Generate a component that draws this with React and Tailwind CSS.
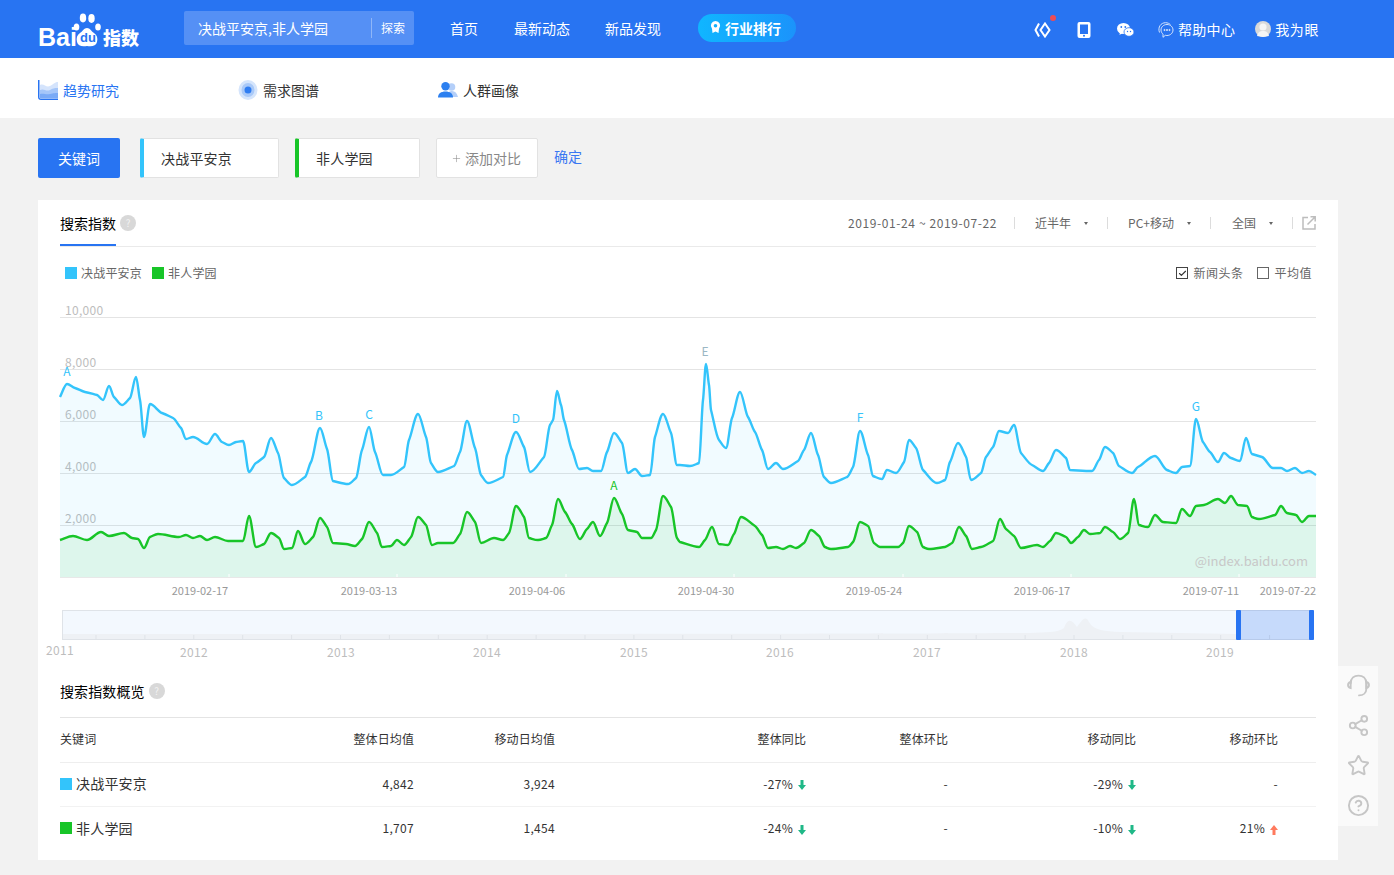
import { Share2, Star, CircleHelp, Plus, Check } from 'lucide-react'

const font = { fontFamily: '"Noto Sans CJK SC", "Liberation Sans", sans-serif' }

const blue = [60,397,67,384,75,388,85,392,97,395,103,400,109,386,114,397,122,405,130,398,136,377,140,400,144,437,150,404,162,413,173,418,181,428,186,439,193,437,207,444,215,434,222,442,229,445,236,442,243,441,249,472,256,463,264,457,271,438,278,453,284,478,292,485,305,477,311,462,320,428,327,449,333,481,348,484,356,478,362,450,369,427,375,452,383,475,391,475,404,467,409,440,418,414,426,437,431,463,438,472,454,466,460,452,467,421,475,448,481,475,488,483,503,477,507,455,516,432,524,447,530,472,544,457,550,425,553,420,557,391,561,405,564,420,572,450,579,469,587,468,593,471,601,471,607,452,614,433,622,443,628,473,635,469,642,476,650,475,655,437,663,414,671,433,677,465,680,465,690,466,699,463,703,400,706,364,709,385,711,410,719,440,726,448,732,418,740,392,748,417,755,432,762,450,768,469,776,463,783,469,798,461,804,450,811,433,818,455,824,477,831,483,847,477,853,467,860,431,868,455,873,476,882,479,887,470,896,473,904,462,909,440,916,448,923,470,937,483,945,480,950,462,958,443,966,457,971,480,981,473,986,457,993,447,999,431,1008,433,1014,425,1021,453,1032,465,1043,471,1049,463,1056,450,1066,458,1070,470,1092,471,1099,460,1105,447,1113,453,1119,466,1132,473,1138,467,1155,456,1167,470,1176,473,1182,467,1190,466,1196,419,1203,442,1210,452,1218,462,1224,453,1231,458,1240,461,1246,438,1252,454,1262,457,1273,468,1281,468,1287,471,1295,468,1302,473,1309,471,1316,475]

const green = [60,540,73,536,87,540,101,532,109,536,124,533,132,538,138,539,144,548,150,537,158,534,179,537,186,535,193,538,200,536,207,540,215,537,228,541,243,541,249,516,256,547,264,544,271,533,279,538,284,549,292,548,298,531,305,544,313,537,320,518,327,527,333,543,346,544,355,546,362,539,369,522,377,533,382,547,391,546,397,540,404,545,411,537,418,517,426,525,432,545,438,543,453,543,460,534,467,512,475,522,481,543,494,538,503,540,509,533,516,506,524,517,529,538,538,540,546,538,552,525,558,499,565,512,572,524,580,539,587,529,593,522,600,536,607,523,614,498,622,514,628,530,637,532,642,538,651,538,656,530,663,496,671,507,677,538,680,542,699,547,705,540,712,527,719,544,728,545,734,534,741,517,755,526,762,535,768,548,776,547,783,549,790,546,796,548,804,543,811,530,819,536,825,547,831,549,848,547,853,542,860,522,868,526,874,543,880,547,898,547,903,543,909,526,917,532,923,547,929,549,945,547,952,543,959,527,966,536,972,549,981,547,993,541,1000,519,1006,529,1014,536,1021,548,1037,545,1043,547,1050,541,1056,533,1066,537,1071,543,1078,537,1084,530,1090,534,1100,533,1105,527,1113,532,1120,539,1128,533,1134,499,1139,525,1148,527,1155,515,1163,522,1176,523,1182,509,1190,516,1196,506,1204,505,1218,499,1225,503,1231,496,1238,505,1247,506,1252,517,1259,519,1275,515,1281,506,1287,513,1296,515,1302,522,1309,516,1316,516]

// monotone curve through the flat [x,y,x,y...] list, no overshoot at the peaks
function smooth(flat) {
  const p = []
  for (let i = 0; i < flat.length; i += 2) p.push([flat[i], flat[i + 1]])
  const n = p.length
  const s = []
  for (let i = 0; i < n - 1; i++) s.push((p[i + 1][1] - p[i][1]) / (p[i + 1][0] - p[i][0]))
  const t = p.map((_, i) => {
    if (i === 0) return s[0]
    if (i === n - 1) return s[n - 2]
    if (s[i - 1] * s[i] <= 0) return 0
    const h0 = p[i][0] - p[i - 1][0]
    const h1 = p[i + 1][0] - p[i][0]
    const mid = (s[i - 1] * h1 + s[i] * h0) / (h0 + h1)
    return Math.sign(s[i]) * Math.min(Math.abs(s[i - 1]), Math.abs(s[i]), 0.5 * Math.abs(mid))
  })
  let d = `M${p[0][0]} ${p[0][1]}`
  for (let i = 0; i < n - 1; i++) {
    const h = (p[i + 1][0] - p[i][0]) / 3
    d += `C${(p[i][0] + h).toFixed(1)} ${(p[i][1] + t[i] * h).toFixed(1)} ${(p[i + 1][0] - h).toFixed(1)} ${(p[i + 1][1] - t[i + 1] * h).toFixed(1)} ${p[i + 1][0]} ${p[i + 1][1]}`
  }
  return d
}

const bluePath = smooth(blue)
const greenPath = smooth(green)

function Logo() {
  return (
    <div className="relative h-[58px] w-[146px] shrink-0">
      <span className="absolute left-[38px] top-[21px] text-[25px] font-bold leading-[32px] text-white" style={{ fontFamily: '"Liberation Sans", sans-serif' }}>Bai</span>
      <svg className="absolute left-[73px] top-[12px]" width="28" height="36" viewBox="0 0 28 36" fill="#fff">
        <ellipse cx="3.500" cy="15" rx="2.800" ry="3.600" />
        <ellipse cx="10" cy="6" rx="3.200" ry="4.400" />
        <ellipse cx="18.500" cy="6.500" rx="3.200" ry="4.400" />
        <ellipse cx="25" cy="15" rx="2.800" ry="3.600" />
        <path d="M14 16c-3 0-4 3-7 5C4 23 3 26 4 30c1 4 5 5 10 4 5 1 9 0 10-4 1-4 0-7-3-9-3-2-4-5-7-5z" />
      </svg>
      <span className="absolute left-[80px] top-[30px] text-[13px] font-bold leading-[16px] text-[#2874f2]" style={{ fontFamily: '"Liberation Sans", sans-serif' }}>du</span>
      <span className="absolute left-[103px] top-[24px] text-[18px] font-black leading-[26px] text-white">指数</span>
    </div>
  )
}

function HeaderIcons() {
  return (
    <div className="ml-auto flex items-center pr-[75px]">
      <span className="relative mr-[26px] mt-[2px] block">
        <svg width="17" height="16" viewBox="0 0 17 16" fill="none" stroke="#fff" strokeWidth="2">
          <path d="M11 1.500 15.500 8 11 14.500 6.500 8z" />
          <path d="M5 1.500 1.500 8 5 14.500" />
        </svg>
        <span className="absolute left-[16px] top-[-7px] size-[6px] rounded-full bg-[#ee4b55]" />
      </span>
      <svg className="mr-[26px] mt-[2px]" width="14" height="16" viewBox="0 0 14 16">
        <rect x="0.500" width="13" height="16" rx="2" fill="#fff" />
        <rect x="3" y="2.500" width="8" height="9.500" fill="#2874f2" />
        <circle cx="7" cy="13.800" r="1" fill="#2874f2" />
      </svg>
      <svg className="mr-[24px] mt-[1px]" width="17" height="14" viewBox="0 0 17 14">
        <ellipse cx="6.500" cy="5.500" rx="6.500" ry="5.500" fill="#fff" />
        <path d="M3 9l-.500 3 3-2z" fill="#fff" />
        <ellipse cx="12" cy="9" rx="5" ry="4.300" fill="#fff" stroke="#2874f2" strokeWidth="0.800" />
        <circle cx="4.300" cy="4" r="0.900" fill="#2874f2" />
        <circle cx="8.300" cy="4" r="0.900" fill="#2874f2" />
        <circle cx="10.500" cy="8.500" r="0.700" fill="#2874f2" />
        <circle cx="13.500" cy="8.500" r="0.700" fill="#2874f2" />
      </svg>
      <svg className="mt-[2px]" width="16" height="16" viewBox="0 0 16 16" fill="none" stroke="#d5e4fc" strokeWidth="1">
        <path d="M1.500 10.500C-.5 5 3 .7 7.500.7c2 0 4 .8 5 2" />
        <path d="M9 2.500c3.300 0 6 2.400 6 5.500s-2.700 5.500-6 5.500c-.6 0-1.200 0-1.700-.2L5 15.300v-3.200C3.700 11 3 9.600 3 8c0-3.100 2.700-5.500 6-5.500z" />
        <circle cx="6.500" cy="8" r="0.600" fill="#fff" />
        <circle cx="9" cy="8" r="0.600" fill="#fff" />
        <circle cx="11.500" cy="8" r="0.600" fill="#fff" />
      </svg>
      <span className="ml-[4px] text-[14px] tracking-[0.3px] text-white">帮助中心</span>
      <svg className="ml-[20px]" width="16" height="16" viewBox="0 0 16 16">
        <circle cx="8" cy="8" r="8" fill="#d9d9d9" />
        <circle cx="8" cy="6" r="3.600" fill="#f5f5f5" />
        <path d="M2 15c1-4 3-5 6-5s5 1 6 5l-6 1z" fill="#f5f5f5" />
      </svg>
      <span className="ml-[4px] mt-[1px] text-[14px] tracking-[0.6px] text-white">我为眼</span>
    </div>
  )
}

function Header() {
  return (
    <header className="flex h-[58px] items-center bg-[#2874f2]">
      <Logo />
      <div className="ml-[38px] mt-[-2px] flex h-[34px] w-[230px] items-center rounded-[2px] bg-[#5590f5]">
        <span className="ml-[14px] w-[173px] text-[14px] text-white">决战平安京,非人学园</span>
        <span className="h-[20px] w-px bg-[#8fb6f8]" />
        <span className="ml-[9px] text-[12px] text-white">探索</span>
      </div>
      <nav className="ml-[36px] mt-[-2px] flex items-center text-[14px] text-white">
        <a>首页</a>
        <a className="ml-[36px]">最新动态</a>
        <a className="ml-[35px]">新品发现</a>
      </nav>
      <div className="ml-[37px] mt-[-3px] flex h-[28px] w-[98px] items-center rounded-full bg-gradient-to-r from-[#10b6ff] to-[#1b93fb] pl-[11px]">
        <svg width="13" height="13" viewBox="0 0 13 13" fill="#fff">
          <path d="M6.500 0a4.700 4.700 0 0 1 3.500 7.800L9.500 12l-3-1.500L3.500 12 3 7.800A4.700 4.700 0 0 1 6.500 0zm0 3a1.800 1.800 0 1 0 0 3.600 1.800 1.800 0 0 0 0-3.600z" />
        </svg>
        <span className="ml-[3px] text-[14px] font-bold leading-none text-white">行业排行</span>
      </div>
      <HeaderIcons />
    </header>
  )
}

function SubNav() {
  return (
    <div className="flex h-[60px] items-center bg-white pl-[38px] pt-[4px] text-[14px] text-[#333]">
      <div className="flex w-[200px] items-center">
        <svg width="20" height="20" viewBox="0 0 20 20">
          <path d="M0 0h1.500v17.500a1 1 0 0 0 1 1H20V20H3a3 3 0 0 1-3-3z" fill="#2874f2" />
          <path d="M2 5c4-2 6 3 10 1s5-4 8-4v16H2z" fill="#d5e4fc" />
          <path d="M2 10c4-2 6 2 10 0s5-2 8-2v10H2z" fill="#a5c6f9" />
          <path d="M2 14c4-1 6 1 10 0s5-1 8-1v5H2z" fill="#7aaaf6" />
        </svg>
        <span className="ml-[5px] text-[#2874f2]">趋势研究</span>
      </div>
      <div className="flex w-[200px] items-center">
        <svg width="20" height="20" viewBox="0 0 20 20">
          <ellipse cx="10" cy="10" rx="9.500" ry="10" fill="#d5e5fc" />
          <ellipse cx="10" cy="10" rx="6.500" ry="7" fill="#a9c9f8" />
          <circle cx="10" cy="10" r="3.500" fill="#2f7df2" />
        </svg>
        <span className="ml-[5px]">需求图谱</span>
      </div>
      <div className="flex items-center">
        <svg width="20" height="16" viewBox="0 0 20 16">
          <circle cx="13.500" cy="5" r="3.800" fill="#b4cff9" />
          <path d="M9 15c0-4 2-6 5-6s5 2 6 6z" fill="#b4cff9" />
          <circle cx="7.500" cy="4.200" r="4.200" fill="#2d80f0" />
          <path d="M0 15.500c0-4 3-6 7.500-6s7.500 2 7.500 6z" fill="#2d80f0" />
        </svg>
        <span className="ml-[5px]">人群画像</span>
      </div>
    </div>
  )
}

function KeywordBox({ name, bar, width }) {
  return (
    <div className={`flex h-[40px] items-center rounded-[2px] border border-[#e2e2e2] bg-white ${width}`} style={{ borderLeft: `4px solid ${bar}` }}>
      <span className="ml-[17px] text-[14px] tracking-[0.2px] text-[#333]">{name}</span>
    </div>
  )
}

function KeywordRow() {
  return (
    <div className="ml-[38px] mt-[20px] flex items-center">
      <div className="flex h-[40px] w-[82px] items-center justify-center rounded-[2px] bg-[#2874f2] text-[14px] text-white">关键词</div>
      <div className="ml-[20px]"><KeywordBox name="决战平安京" bar="#33c4fb" width="w-[139px]" /></div>
      <div className="ml-[16px]"><KeywordBox name="非人学园" bar="#18c528" width="w-[125px]" /></div>
      <div className="ml-[16px] flex h-[40px] w-[102px] items-center rounded-[2px] border border-[#e2e2e2] bg-white pl-[14px] text-[14px] text-[#888]">
        <Plus size={11} strokeWidth={1.200} />
        <span className="ml-[3px]">添加对比</span>
      </div>
      <a className="ml-[16px] mt-[-3px] text-[14px] text-[#3a78f2]">确定</a>
    </div>
  )
}

function Tip() {
  return <span className="ml-[4px] flex size-[16px] items-center justify-center rounded-full bg-[#d8d8d8] text-[10px] leading-none text-[#f2f2f2]">?</span>
}

function Caret() {
  return <span className="ml-[13px] h-0 w-0 border-x-[2.500px] border-t-[3px] border-x-transparent border-t-[#666]" />
}

function Sep({ ml }) {
  return <span className={`h-[12px] w-px bg-[#dcdcdc] ${ml}`} />
}

function CardHead() {
  return (
    <div className="mx-[22px] flex h-[47px] items-start border-b border-[#eaeaea]">
      <div className="flex h-[46px] items-center">
        <span className="flex h-[46px] w-[56px] items-center border-b-2 border-[#2874f2] pt-[2px] text-[14px] text-black">搜索指数</span>
        <Tip />
      </div>
      <div className="ml-auto flex h-[46px] items-center text-[12px] text-[#666]">
        <span className="tracking-[0.6px]">2019-01-24 ~ 2019-07-22</span>
        <Sep ml="ml-[17px]" />
        <span className="ml-[20px]">近半年</span>
        <Caret />
        <Sep ml="ml-[19px]" />
        <span className="ml-[20px]">PC+移动</span>
        <Caret />
        <Sep ml="ml-[19px]" />
        <span className="ml-[21px]">全国</span>
        <Caret />
        <Sep ml="ml-[19px]" />
        <svg className="ml-[9px]" width="14" height="14" viewBox="0 0 14 14" fill="none" stroke="#bdbdbd" strokeWidth="1.500">
          <path d="M6 1.500H1v11.500h12V8" />
          <path d="M5.500 8.500 13 1M8.500.8h4.700v4.700" />
        </svg>
      </div>
    </div>
  )
}

function LegendRow() {
  return (
    <div className="mx-[22px] flex h-[52px] items-center pl-[5px] text-[12px] text-[#666]">
      <span className="size-[12px] bg-[#33c4fb]" />
      <span className="ml-[4px] tracking-[0.2px]">决战平安京</span>
      <span className="ml-[10px] size-[12px] bg-[#18c528]" />
      <span className="ml-[4px] tracking-[0.2px]">非人学园</span>
      <div className="ml-auto flex items-center pr-[4px] tracking-[0.5px]">
        <span className="flex size-[12px] items-center justify-center border border-[#444]"><Check size={9} strokeWidth={3} color="#333" /></span>
        <span className="ml-[5px]">新闻头条</span>
        <span className="ml-[14px] size-[12px] border border-[#666]" />
        <span className="ml-[5px]">平均值</span>
      </div>
    </div>
  )
}

const grid = [
  [317.5, '10,000'],
  [369.5, '8,000'],
  [421.5, '6,000'],
  [473.5, '4,000'],
  [525.5, '2,000'],
]
const marks = [
  ['A', 67, 376, '#33c4fb'], ['B', 319, 420, '#33c4fb'], ['C', 369, 419, '#33c4fb'], ['D', 516, 423, '#33c4fb'],
  ['E', 705, 356, '#9bb7c4'], ['F', 860, 422, '#33c4fb'], ['G', 1196, 411, '#33c4fb'], ['A', 614, 490, '#18c528'],
]
const xLabels = [[200, '2019-02-17'], [369, '2019-03-13'], [537, '2019-04-06'], [706, '2019-04-30'], [874, '2019-05-24'], [1042, '2019-06-17'], [1211, '2019-07-11'], [1288, '2019-07-22']]
const xTicks = [229, 397, 566, 734, 903, 1071, 1239]
const years = [[60, 655, '2011'], [194, 657, '2012'], [341, 657, '2013'], [487, 657, '2014'], [634, 657, '2015'], [780, 657, '2016'], [927, 657, '2017'], [1074, 657, '2018'], [1220, 657, '2019']]
const sliderTicks = Array.from({ length: 25 }, (_, i) => 96 + i * 48.9)

function Chart() {
  return (
    <svg className="block" width="1300" height="372" viewBox="38 299 1300 372" style={font}>
      {grid.map(([y, label]) => (
        <g key={label}>
          <line x1="60" x2="1316" y1={y} y2={y} stroke="#e4e4e4" />
          <text x="65" y={y - 2.5} fontSize="12" fill="#bdbdbd" letterSpacing="0.3">{label}</text>
        </g>
      ))}
      <path d={`${bluePath}L1316 577L60 577Z`} fill="#33c4fb" fillOpacity="0.07" />
      <path d={`${greenPath}L1316 577L60 577Z`} fill="#18c528" fillOpacity="0.09" />
      <line x1="60" x2="1316" y1="577.5" y2="577.5" stroke="#e8e8e8" />
      {xTicks.map((x) => <line key={x} x1={x} x2={x} y1="574" y2="577" stroke="#fff" />)}
      <path d={bluePath} fill="none" stroke="#33c4fb" strokeWidth="2.4" strokeLinejoin="round" />
      <path d={greenPath} fill="none" stroke="#18c528" strokeWidth="2.4" strokeLinejoin="round" />
      {marks.map(([t, x, y, c]) => <text key={t + x} x={x} y={y} textAnchor="middle" fontSize="12" fill={c}>{t}</text>)}
      <text x="1308" y="566" textAnchor="end" fontSize="13" fill="#c8c8c8">@index.baidu.com</text>
      {xLabels.map(([x, t]) => <text key={t} x={x} y="595" textAnchor="middle" fontSize="11" fill="#999">{t}</text>)}

      <rect x="62.5" y="610.5" width="1251" height="29" fill="#f3f8fe" stroke="#dfe3e8" />
      <path d="M63 634C500 634 900 634 1030 633C1045 632 1058 633 1064 628C1068 617 1072 620 1077 627C1081 622 1085 614 1089 622C1094 631 1105 631 1120 632C1160 633 1200 633 1236 634V639H63Z" fill="#eef1f5" />
      {sliderTicks.map((x) => <line key={x} x1={x} x2={x} y1="635" y2="639" stroke="#dfe3e8" />)}
      <rect x="1238" y="610" width="73" height="30" fill="#2874f2" fillOpacity="0.22" />
      <rect x="1236" y="610" width="5" height="30" rx="1" fill="#2874f2" />
      <rect x="1309" y="610" width="5" height="30" rx="1" fill="#2874f2" />
      {years.map(([x, y, t]) => <text key={t} x={x} y={y} textAnchor="middle" fontSize="12" fill="#bdbdbd" letterSpacing="0.4">{t}</text>)}
    </svg>
  )
}

function Delta({ text, dir }) {
  if (!dir) return <span>{text}</span>
  const up = dir === 'up'
  return (
    <span className="inline-flex items-center justify-end">
      {text}
      <svg className="ml-[5px] mt-[3px]" width="8" height="10" viewBox="0 0 8 10" fill={up ? '#ff7a5e' : '#1fb887'}>
        {up ? <path d="M4 0 8 5H5.500v5h-3V5H0z" /> : <path d="M4 10 0 5h2.500V0h3v5H8z" />}
      </svg>
    </span>
  )
}

const tableCols = 'grid grid-cols-[214px_140px_141px_251px_142px_188px_142px] items-center'
const heads = ['整体日均值', '移动日均值', '整体同比', '整体环比', '移动同比', '移动环比']
const rows = [
  { name: '决战平安京', color: 'bg-[#33c4fb]', cells: ['4,842', '3,924'], d: [['-27%', 'down'], ['-'], ['-29%', 'down'], ['-']] },
  { name: '非人学园', color: 'bg-[#18c528]', cells: ['1,707', '1,454'], d: [['-24%', 'down'], ['-'], ['-10%', 'down'], ['21%', 'up']] },
]

function Overview() {
  return (
    <section className="mx-[22px]">
      <div className="flex h-[47px] items-center border-b border-[#e4e4e4] pb-[6px]">
        <span className="text-[14px] tracking-[0.1px] text-black">搜索指数概览</span>
        <Tip />
      </div>
      <div className={`${tableCols} h-[45px] border-b border-[#eeeeee] pb-[2px] text-[12px] tracking-[0.1px] text-[#333]`}>
        <span>关键词</span>
        {heads.map((h) => <span key={h} className="text-right">{h}</span>)}
      </div>
      {rows.map((r, i) => (
        <div key={r.name} className={`${tableCols} h-[44px] pb-[2px] text-[12px] tracking-[0.3px] text-[#333] ${i === 0 ? 'border-b border-[#f2f2f2]' : ''}`}>
          <span className="flex items-center text-[14px] tracking-[0.2px]">
            <span className={`mr-[4px] size-[12px] ${r.color}`} />
            {r.name}
          </span>
          {r.cells.map((c) => <span key={c} className="text-right">{c}</span>)}
          {r.d.map(([t, dir], j) => (
            <span key={j} className="text-right"><Delta text={t} dir={dir} /></span>
          ))}
        </div>
      ))}
    </section>
  )
}

function SideRail() {
  return (
    <aside className="absolute left-[1338px] top-[666px] flex h-[160px] w-[40px] flex-col items-center gap-[17px] bg-[#fafafa] pt-[8px] text-[#c6c6c6]">
      <svg width="23" height="23" viewBox="0 0 22 22" fill="none" stroke="currentColor" strokeWidth="1.800" strokeLinecap="round">
        <path d="M3.500 9C3.500 4 7 1.500 11 1.500S18.500 4 18.500 9v5c0 4-3 6.500-7 6.500" />
        <path d="M3.500 7.500C1.500 8 1 9.500 1 10.500s.5 2.500 2.500 3zM18.500 7.500c2 .5 2.500 2 2.500 3s-.5 2.500-2.500 3z" />
      </svg>
      <Share2 size={23} strokeWidth={2} />
      <Star size={23} strokeWidth={2} />
      <CircleHelp size={23} strokeWidth={2} />
    </aside>
  )
}

export default function App() {
  return (
    <div className="relative min-h-[875px] bg-[#f2f2f2]" style={font}>
      <Header />
      <SubNav />
      <KeywordRow />
      <main className="mb-[15px] ml-[38px] mt-[22px] h-[660px] w-[1300px] bg-white">
        <CardHead />
        <LegendRow />
        <Chart />
        <Overview />
      </main>
      <SideRail />
    </div>
  )
}
